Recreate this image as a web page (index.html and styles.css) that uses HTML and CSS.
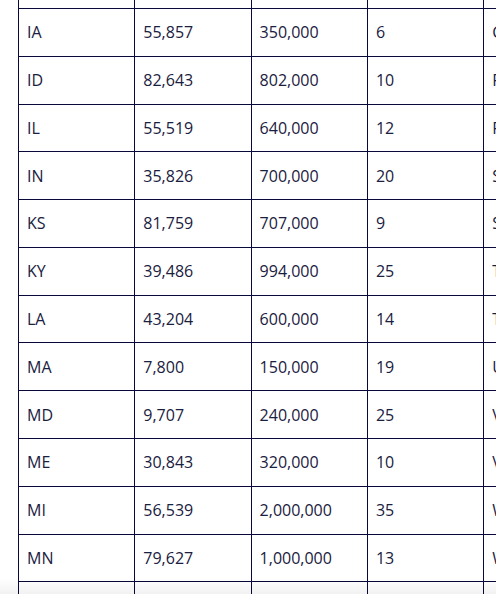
FILE: index.html
```html
<!DOCTYPE html>
<html lang="en">
<head>
<meta charset="utf-8">
<title>States</title>
<link rel="stylesheet" href="styles.css">
</head>
<body>
<div class="viewport">
  <table class="data">
    <colgroup><col class="c"><col class="c"><col class="c"><col class="c"><col class="c"></colgroup>
    <tbody>
      <tr><td>&nbsp;</td><td>&nbsp;</td><td>&nbsp;</td><td>&nbsp;</td><td>&nbsp;</td></tr>
      <tr><td>IA</td><td>55,857</td><td>350,000</td><td>6</td><td>Corn</td></tr>
      <tr><td>ID</td><td>82,643</td><td>802,000</td><td>10</td><td>Forest</td></tr>
      <tr><td>IL</td><td>55,519</td><td>640,000</td><td>12</td><td>Farm</td></tr>
      <tr><td>IN</td><td>35,826</td><td>700,000</td><td>20</td><td>Steel</td></tr>
      <tr><td>KS</td><td>81,759</td><td>707,000</td><td>9</td><td>Sunflower</td></tr>
      <tr><td>KY</td><td>39,486</td><td>994,000</td><td>25</td><td>Tobacco</td></tr>
      <tr><td>LA</td><td>43,204</td><td>600,000</td><td>14</td><td>Trade</td></tr>
      <tr><td>MA</td><td>7,800</td><td>150,000</td><td>19</td><td>Unity</td></tr>
      <tr><td>MD</td><td>9,707</td><td>240,000</td><td>25</td><td>Valor</td></tr>
      <tr><td>ME</td><td>30,843</td><td>320,000</td><td>10</td><td>Vacation</td></tr>
      <tr><td>MI</td><td>56,539</td><td>2,000,000</td><td>35</td><td>Water</td></tr>
      <tr><td>MN</td><td>79,627</td><td>1,000,000</td><td>13</td><td>Wheat</td></tr>
      <tr><td>&nbsp;</td><td>&nbsp;</td><td>&nbsp;</td><td>&nbsp;</td><td>&nbsp;</td></tr>
    </tbody>
  </table>
</div>
<div class="fade"></div>
</body>
</html>
```
FILE: styles.css
```css
html, body {
  margin: 0;
  padding: 0;
  overflow: hidden;
  background: #ffffff;
  height: 100%;
}
body {
  font-family: "Open Sans", "Noto Sans", sans-serif;
  font-size: 16px;
  color: #1a2040;
}
.viewport {
  padding-left: 18px;
  height: 594px;
  overflow: hidden;
}
.data {
  border-collapse: collapse;
  table-layout: fixed;
  width: 581.5px;
  margin-top: -39.83px;
}
.data .c {
  width: 116.3px;
}
.data td {
  border: 1px solid #08083a;
  padding: 11.4px 8px;
  line-height: 24px;
  text-align: left;
  white-space: nowrap;
  overflow: hidden;
}
.fade {
  position: fixed;
  left: 0;
  right: 0;
  bottom: 0;
  height: 16px;
  background: linear-gradient(to bottom, rgba(0,0,0,0), rgba(0,0,0,0.05));
  pointer-events: none;
}
```
